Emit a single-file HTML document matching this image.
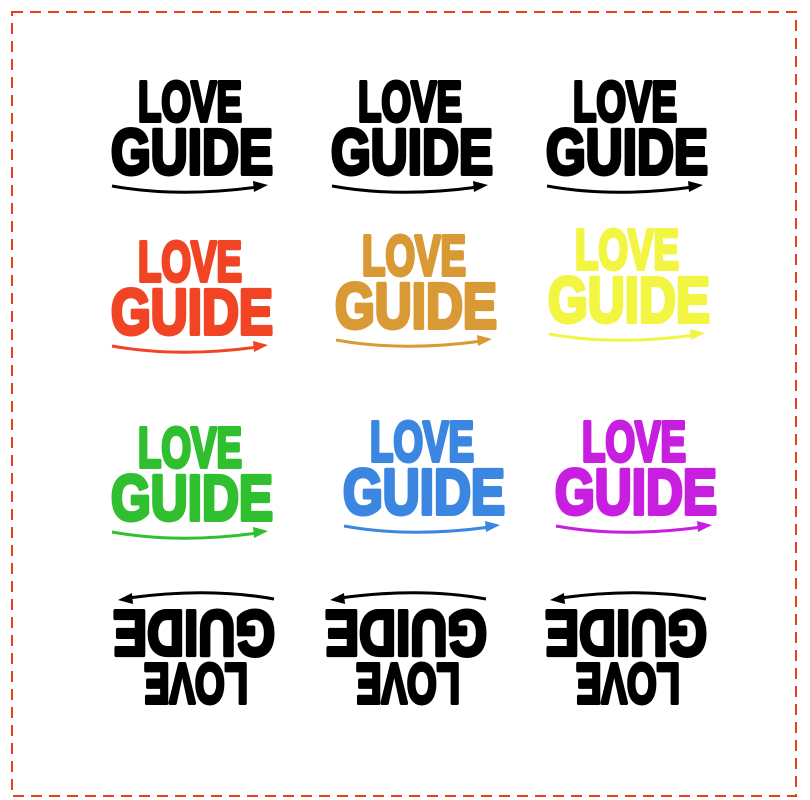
<!DOCTYPE html>
<html><head><meta charset="utf-8"><style>
body{margin:0;width:810px;height:800px;background:#fff;position:relative;overflow:hidden}
.frame{position:absolute;left:0;top:0}
.logo{position:absolute;width:170px;height:125px}
.logo text{font-family:"Liberation Sans",sans-serif;font-weight:bold}
.r{transform:rotate(180deg)}
</style></head><body>
<svg class="frame" width="810" height="800"><rect x="12" y="12" width="784" height="784" fill="none" stroke="#e8401c" stroke-width="2" stroke-dasharray="11,7"/></svg>
<svg width="0" height="0" style="position:absolute">
<defs>
<g id="arrow"><path d="M4,108 Q70,120 150,109" fill="none" stroke-width="3" stroke="currentColor"/><path d="M145,103 L160,107 L146,114 Z" fill="currentColor"/></g>
<g id="txt" fill="currentColor" stroke="currentColor" stroke-width="4" stroke-linejoin="round"><text x="30" y="43" font-size="57" textLength="104" lengthAdjust="spacingAndGlyphs">LOVE</text><text x="3" y="96" font-size="64" textLength="162" lengthAdjust="spacingAndGlyphs">GUIDE</text></g>
</defs></svg>
<svg class="logo" style="left:108px;top:78px;color:#000" viewBox="0 0 170 125"><g fill="currentColor" stroke="currentColor" stroke-width="4" stroke-linejoin="round"><text x="30" y="43" font-size="57" textLength="104" lengthAdjust="spacingAndGlyphs">LOVE</text><text x="3" y="96" font-size="64" textLength="162" lengthAdjust="spacingAndGlyphs">GUIDE</text></g><use href="#arrow"/></svg>
<svg class="logo" style="left:328px;top:78px;color:#000" viewBox="0 0 170 125"><g fill="currentColor" stroke="currentColor" stroke-width="4" stroke-linejoin="round"><text x="30" y="43" font-size="57" textLength="104" lengthAdjust="spacingAndGlyphs">LOVE</text><text x="3" y="96" font-size="64" textLength="162" lengthAdjust="spacingAndGlyphs">GUIDE</text></g><use href="#arrow"/></svg>
<svg class="logo" style="left:543px;top:78px;color:#000" viewBox="0 0 170 125"><g fill="currentColor" stroke="currentColor" stroke-width="4" stroke-linejoin="round"><text x="30" y="43" font-size="57" textLength="104" lengthAdjust="spacingAndGlyphs">LOVE</text><text x="3" y="96" font-size="64" textLength="162" lengthAdjust="spacingAndGlyphs">GUIDE</text></g><use href="#arrow"/></svg>

<svg class="logo" style="left:108px;top:238px;color:#f04424" viewBox="0 0 170 125"><g fill="currentColor" stroke="currentColor" stroke-width="4" stroke-linejoin="round"><text x="30" y="43" font-size="57" textLength="104" lengthAdjust="spacingAndGlyphs">LOVE</text><text x="3" y="96" font-size="64" textLength="162" lengthAdjust="spacingAndGlyphs">GUIDE</text></g><use href="#arrow"/></svg>
<svg class="logo" style="left:332px;top:232px;color:#d99a35" viewBox="0 0 170 125"><g fill="currentColor" stroke="currentColor" stroke-width="4" stroke-linejoin="round"><text x="30" y="43" font-size="57" textLength="104" lengthAdjust="spacingAndGlyphs">LOVE</text><text x="3" y="96" font-size="64" textLength="162" lengthAdjust="spacingAndGlyphs">GUIDE</text></g><use href="#arrow"/></svg>
<svg class="logo" style="left:545px;top:226px;color:#f2f542" viewBox="0 0 170 125"><g fill="currentColor" stroke="currentColor" stroke-width="4" stroke-linejoin="round"><text x="30" y="43" font-size="57" textLength="104" lengthAdjust="spacingAndGlyphs">LOVE</text><text x="3" y="96" font-size="64" textLength="162" lengthAdjust="spacingAndGlyphs">GUIDE</text></g><use href="#arrow"/></svg>

<svg class="logo" style="left:108px;top:424px;color:#2fbf2f" viewBox="0 0 170 125"><g fill="currentColor" stroke="currentColor" stroke-width="4" stroke-linejoin="round"><text x="30" y="43" font-size="57" textLength="104" lengthAdjust="spacingAndGlyphs">LOVE</text><text x="3" y="96" font-size="64" textLength="162" lengthAdjust="spacingAndGlyphs">GUIDE</text></g><use href="#arrow"/></svg>
<svg class="logo" style="left:340px;top:418px;color:#3a86e0" viewBox="0 0 170 125"><g fill="currentColor" stroke="currentColor" stroke-width="4" stroke-linejoin="round"><text x="30" y="43" font-size="57" textLength="104" lengthAdjust="spacingAndGlyphs">LOVE</text><text x="3" y="96" font-size="64" textLength="162" lengthAdjust="spacingAndGlyphs">GUIDE</text></g><use href="#arrow"/></svg>
<svg class="logo" style="left:552px;top:418px;color:#c81ee0" viewBox="0 0 170 125"><g fill="currentColor" stroke="currentColor" stroke-width="4" stroke-linejoin="round"><text x="30" y="43" font-size="57" textLength="104" lengthAdjust="spacingAndGlyphs">LOVE</text><text x="3" y="96" font-size="64" textLength="162" lengthAdjust="spacingAndGlyphs">GUIDE</text></g><use href="#arrow"/></svg>

<svg class="logo r" style="left:108px;top:582px;color:#000" viewBox="0 0 170 125"><g fill="currentColor" stroke="currentColor" stroke-width="4" stroke-linejoin="round"><text x="30" y="43" font-size="57" textLength="104" lengthAdjust="spacingAndGlyphs">LOVE</text><text x="3" y="96" font-size="64" textLength="162" lengthAdjust="spacingAndGlyphs">GUIDE</text></g><use href="#arrow"/></svg>
<svg class="logo r" style="left:320px;top:582px;color:#000" viewBox="0 0 170 125"><g fill="currentColor" stroke="currentColor" stroke-width="4" stroke-linejoin="round"><text x="30" y="43" font-size="57" textLength="104" lengthAdjust="spacingAndGlyphs">LOVE</text><text x="3" y="96" font-size="64" textLength="162" lengthAdjust="spacingAndGlyphs">GUIDE</text></g><use href="#arrow"/></svg>
<svg class="logo r" style="left:540px;top:582px;color:#000" viewBox="0 0 170 125"><g fill="currentColor" stroke="currentColor" stroke-width="4" stroke-linejoin="round"><text x="30" y="43" font-size="57" textLength="104" lengthAdjust="spacingAndGlyphs">LOVE</text><text x="3" y="96" font-size="64" textLength="162" lengthAdjust="spacingAndGlyphs">GUIDE</text></g><use href="#arrow"/></svg>
</body></html>
